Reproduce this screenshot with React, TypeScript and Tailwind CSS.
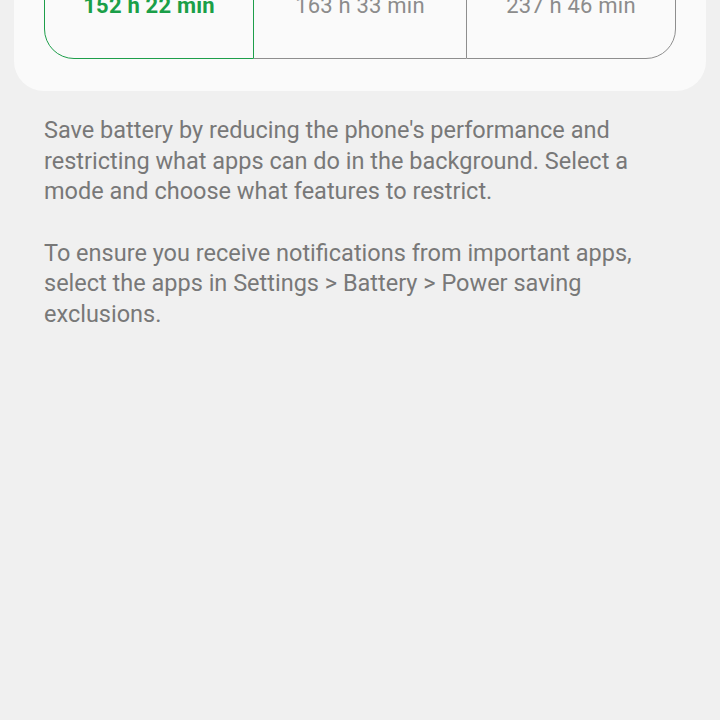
const modes = [
  { time: '152 h 22 min', active: true },
  { time: '163 h 33 min', active: false },
  { time: '237 h 46 min', active: false },
]

export default function App() {
  return (
    <div
      className="h-[720px] w-[720px] overflow-hidden bg-[#f0f0f0]"
      style={{ fontFamily: 'Roboto, "Noto Sans", sans-serif' }}
    >
      <section className="mx-[14px] -mt-[59px] rounded-[30px] bg-[#fafafa] px-[30px] pb-[32px]">
        <div className="flex h-[118px]">
          {modes.map((m, i) => (
            <div
              key={m.time}
              className={
                i === 0
                  ? 'flex w-[210px] items-end justify-center rounded-l-[30px] border-[1.5px] border-[#1d9e4a] pb-[39px]'
                  : i === 1
                    ? 'flex w-[212px] items-end justify-center border-y-[1.5px] border-[#8e8e8e] pb-[39px]'
                    : 'flex w-[210px] items-end justify-center rounded-r-[30px] border-[1.5px] border-[#8e8e8e] pb-[39px]'
              }
            >
              <span
                className={
                  m.active
                    ? 'text-[22px] leading-[26px] font-bold tracking-[0.2px] text-[#1a9f48]'
                    : 'text-[22px] leading-[26px] tracking-[0.2px] text-[#8c8c8c]'
                }
              >
                {m.time}
              </span>
            </div>
          ))}
        </div>
      </section>

      <div className="mt-[24px] px-[44px] text-[23.5px] leading-[30.5px] text-[#787878]">
        <p>
          Save battery by reducing the phone's performance and restricting what apps can do in the
          background. Select a mode and choose what features to restrict.
        </p>
        <p className="mt-[31px]">
          To ensure you receive notifications from important apps, select the apps in Settings &gt;
          Battery &gt; Power saving exclusions.
        </p>
      </div>
    </div>
  )
}
